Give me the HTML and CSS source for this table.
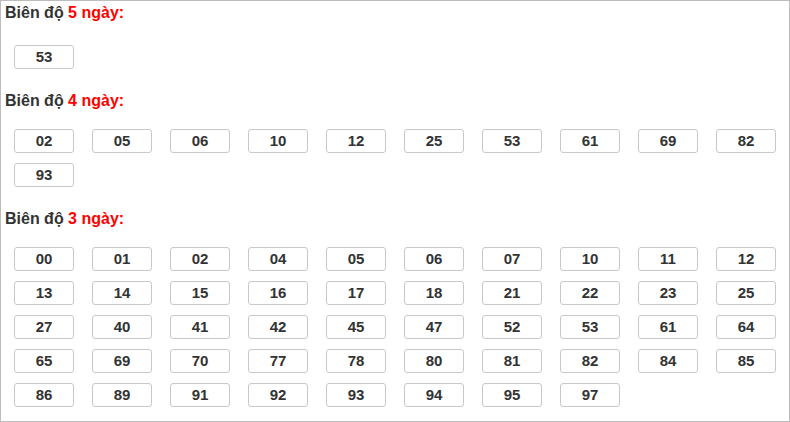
FILE: index.html
```html
<!DOCTYPE html>
<html lang="vi">
<head>
<meta charset="utf-8">
<link rel="stylesheet" href="styles.css">
</head>
<body>
<div class="panel">
  <div class="section section--first">
    <div class="title">Biên độ <span class="hl">5 ngày:</span></div>
    <div class="grid">
      <span class="num">53</span>
    </div>
  </div>
  <div class="section">
    <div class="title">Biên độ <span class="hl">4 ngày:</span></div>
    <div class="grid">
      <span class="num">02</span><span class="num">05</span><span class="num">06</span><span class="num">10</span><span class="num">12</span><span class="num">25</span><span class="num">53</span><span class="num">61</span><span class="num">69</span><span class="num">82</span>
      <span class="num">93</span>
    </div>
  </div>
  <div class="section">
    <div class="title">Biên độ <span class="hl">3 ngày:</span></div>
    <div class="grid">
      <span class="num">00</span><span class="num">01</span><span class="num">02</span><span class="num">04</span><span class="num">05</span><span class="num">06</span><span class="num">07</span><span class="num">10</span><span class="num">11</span><span class="num">12</span>
      <span class="num">13</span><span class="num">14</span><span class="num">15</span><span class="num">16</span><span class="num">17</span><span class="num">18</span><span class="num">21</span><span class="num">22</span><span class="num">23</span><span class="num">25</span>
      <span class="num">27</span><span class="num">40</span><span class="num">41</span><span class="num">42</span><span class="num">45</span><span class="num">47</span><span class="num">52</span><span class="num">53</span><span class="num">61</span><span class="num">64</span>
      <span class="num">65</span><span class="num">69</span><span class="num">70</span><span class="num">77</span><span class="num">78</span><span class="num">80</span><span class="num">81</span><span class="num">82</span><span class="num">84</span><span class="num">85</span>
      <span class="num">86</span><span class="num">89</span><span class="num">91</span><span class="num">92</span><span class="num">93</span><span class="num">94</span><span class="num">95</span><span class="num">97</span>
    </div>
  </div>
</div>
</body>
</html>
```

FILE: styles.css
```css
html, body {
  margin: 0;
  padding: 0;
  background: #fff;
}

.panel {
  box-sizing: border-box;
  width: 790px;
  height: 422px;
  border: 1px solid #bdbdbd;
  padding: 2px 0 0 4px;
  font-family: "Liberation Sans", Arial, sans-serif;
  color: #333;
}

.section {
  margin-top: 22px;
}

.section--first {
  margin-top: 0;
}

.title {
  font-size: 16px;
  font-weight: bold;
  line-height: 20px;
}

.hl {
  color: #f00;
}

.grid {
  display: flex;
  flex-wrap: wrap;
  column-gap: 18px;
  row-gap: 10px;
  margin-top: 18px;
  padding-left: 9px;
  width: 780px;
}

.section--first .grid {
  margin-top: 22px;
}

.num {
  box-sizing: border-box;
  width: 60px;
  height: 24px;
  border: 1px solid #c8c8c8;
  border-radius: 3px;
  font-size: 15px;
  font-weight: bold;
  line-height: 22px;
  text-align: center;
  color: #333;
}
```
